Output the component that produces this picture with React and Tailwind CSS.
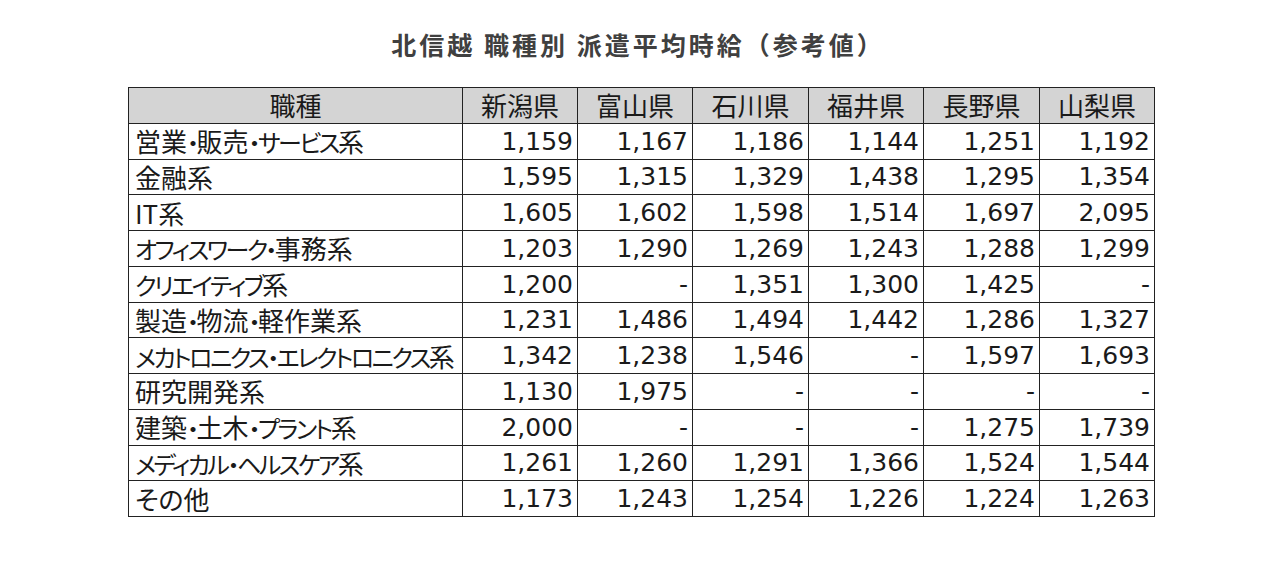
import React from 'react';

const prefs = ['新潟県', '富山県', '石川県', '福井県', '長野県', '山梨県'];

const rows = [
  ['営業・販売・サービス系', '1,159', '1,167', '1,186', '1,144', '1,251', '1,192'],
  ['金融系', '1,595', '1,315', '1,329', '1,438', '1,295', '1,354'],
  ['IT系', '1,605', '1,602', '1,598', '1,514', '1,697', '2,095'],
  ['オフィスワーク・事務系', '1,203', '1,290', '1,269', '1,243', '1,288', '1,299'],
  ['クリエイティブ系', '1,200', '-', '1,351', '1,300', '1,425', '-'],
  ['製造・物流・軽作業系', '1,231', '1,486', '1,494', '1,442', '1,286', '1,327'],
  ['メカトロニクス・エレクトロニクス系', '1,342', '1,238', '1,546', '-', '1,597', '1,693'],
  ['研究開発系', '1,130', '1,975', '-', '-', '-', '-'],
  ['建築・土木・プラント系', '2,000', '-', '-', '-', '1,275', '1,739'],
  ['メディカル・ヘルスケア系', '1,261', '1,260', '1,291', '1,366', '1,524', '1,544'],
  ['その他', '1,173', '1,243', '1,254', '1,226', '1,224', '1,263'],
];

const widths = ['w-[334px]', 'w-[115px]', 'w-[115px]', 'w-[116px]', 'w-[115px]', 'w-[116px]', 'w-[115px]'];

// katakana are set tighter than kanji, like the narrow UI font of the original
const isKana = ch => /[\u30a0-\u30ff]/.test(ch);

const Label = ({ text }) => {
  const runs = [];
  for (const ch of text) {
    const kana = isKana(ch);
    const last = runs[runs.length - 1];
    if (last && last.kana === kana) last.s += ch;
    else runs.push({ kana, s: ch });
  }
  return runs.map((r, i) => (
    <span key={i} className={r.kana ? 'text-[24px] tracking-[-2.5px]' : ''}>{r.s}</span>
  ));
};

const App = () => {
  return (
    <div className="w-[1284px] h-[578px] bg-white font-['Noto_Sans_CJK_JP','Noto_Sans',sans-serif] text-[#1a1a1a]">
      <h1 className="pt-[28px] pr-[8px] text-center text-[25px] leading-[32px] tracking-[3px] font-bold text-[#404040]">
        北信越 職種別 派遣平均時給（参考値）
      </h1>

      <table className="mt-[27px] ml-[128px] w-[1026px] table-fixed border-collapse text-[26px] leading-none">
        <colgroup>
          {widths.map((w, i) => <col key={i} className={w} />)}
        </colgroup>
        <thead>
          <tr className="h-[35.75px] bg-[#d4d4d4]">
            <th className="border border-[#222] font-normal text-center">職種</th>
            {prefs.map(p => (
              <th key={p} className="border border-[#222] font-normal text-center">{p}</th>
            ))}
          </tr>
        </thead>
        <tbody>
          {rows.map(r => (
            <tr key={r[0]} className="h-[35.75px]">
              <td className="border border-[#222] pl-[6px] whitespace-nowrap [font-feature-settings:'palt']">
                <Label text={r[0]} />
              </td>
              {r.slice(1).map((v, i) => (
                <td key={i} className="border border-[#222] pr-[4px] text-right font-['DejaVu_Sans',sans-serif] text-[25px]">{v}</td>
              ))}
            </tr>
          ))}
        </tbody>
      </table>
    </div>
  );
};

export default App;
